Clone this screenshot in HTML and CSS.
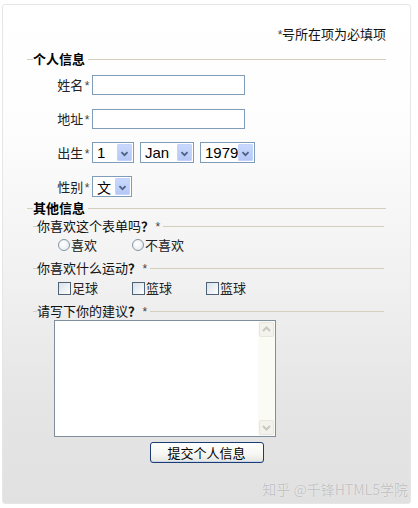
FILE: index.html
```html
<!DOCTYPE html>
<html lang="zh-CN">
<head>
<meta charset="utf-8">
<title>个人信息表单</title>
<link rel="stylesheet" href="styles.css">
</head>
<body>
<div class="page">
  <p class="note"><i class="star">*</i>号所在项为必填项</p>

  <section class="fs">
    <div class="legend"><span class="lg-pre"></span><span class="lg-text">个人信息</span><span class="lg-line"></span></div>
    <div class="row">
      <label class="lbl">姓名<i class="star">*</i></label>
      <input class="text-input" type="text">
    </div>
    <div class="row">
      <label class="lbl">地址<i class="star">*</i></label>
      <input class="text-input" type="text">
    </div>
    <div class="row">
      <label class="lbl">出生<i class="star">*</i></label>
      <span class="select sel-day"><span class="sel-val">1</span><span class="sel-btn"><svg width="15" height="17" viewBox="0 0 15 17"><polyline points="4,7 7.5,10.5 11,7" fill="none" stroke="#4d6185" stroke-width="2"/></svg></span></span>
      <span class="select sel-mon"><span class="sel-val">Jan</span><span class="sel-btn"><svg width="15" height="17" viewBox="0 0 15 17"><polyline points="4,7 7.5,10.5 11,7" fill="none" stroke="#4d6185" stroke-width="2"/></svg></span></span>
      <span class="select sel-year"><span class="sel-val">1979</span><span class="sel-btn"><svg width="15" height="17" viewBox="0 0 15 17"><polyline points="4,7 7.5,10.5 11,7" fill="none" stroke="#4d6185" stroke-width="2"/></svg></span></span>
    </div>
    <div class="row">
      <label class="lbl">性别<i class="star">*</i></label>
      <span class="select sel-sex"><span class="sel-val cjk">文</span><span class="sel-btn"><svg width="15" height="17" viewBox="0 0 15 17"><polyline points="4,7 7.5,10.5 11,7" fill="none" stroke="#4d6185" stroke-width="2"/></svg></span></span>
    </div>
  </section>

  <section class="fs fs-other">
    <div class="legend"><span class="lg-pre"></span><span class="lg-text">其他信息</span><span class="lg-line"></span></div>

    <div class="sub">
      <div class="legend sub-legend"><span class="lg-pre"></span><span class="lg-text">你喜欢这个表单吗<b>？</b><i class="star">*</i></span><span class="lg-line"></span></div>
      <div class="choices">
        <span class="choice"><span class="radio"></span>喜欢</span>
        <span class="choice"><span class="radio"></span>不喜欢</span>
      </div>
    </div>

    <div class="sub sub-2">
      <div class="legend sub-legend"><span class="lg-pre"></span><span class="lg-text">你喜欢什么运动<b>？</b><i class="star">*</i></span><span class="lg-line"></span></div>
      <div class="choices checks">
        <span class="choice"><span class="check"></span>足球</span>
        <span class="choice"><span class="check"></span>篮球</span>
        <span class="choice"><span class="check"></span>篮球</span>
      </div>
    </div>

    <div class="sub sub-3">
      <div class="legend sub-legend"><span class="lg-pre"></span><span class="lg-text">请写下你的建议<b>？</b><i class="star">*</i></span><span class="lg-line"></span></div>
      <div class="textarea">
        <div class="ta-text"></div>
        <div class="scrollbar">
          <span class="sb-btn"><svg width="13" height="13" viewBox="0 0 13 13"><polyline points="3,8 6.5,4.5 10,8" fill="none" stroke="#c9c8c0" stroke-width="2"/></svg></span>
          <span class="sb-track"></span>
          <span class="sb-btn"><svg width="13" height="13" viewBox="0 0 13 13"><polyline points="3,5 6.5,8.5 10,5" fill="none" stroke="#c9c8c0" stroke-width="2"/></svg></span>
        </div>
      </div>
    </div>
  </section>

  <div class="actions"><button class="btn" type="button">提交个人信息</button></div>

  <div class="watermark">知乎 @千锋HTML5学院</div>
</div>
</body>
</html>
```
FILE: styles.css
```css
* { box-sizing: border-box; }

html, body {
  margin: 0;
  padding: 0;
  background: #fff;
}

body {
  font-family: "Noto Sans CJK SC", "Liberation Sans", sans-serif;
  font-size: 13px;
  color: #111;
}

.page {
  position: relative;
  margin: 4px 0 0 2px;
  width: 409px;
  height: 500px;
  border: 1px solid #e6e6e6;
  border-radius: 3px;
  padding-top: 21px;
  background: linear-gradient(to bottom, #ffffff 0%, #fdfdfd 25%, #f1f1f1 55%, #e5e5e5 80%, #e1e1e1 100%);
}

.note {
  margin: 0 24px 0 0;
  height: 16px;
  line-height: 16px;
  text-align: right;
  color: #111;
}

.star {
  font-family: "Liberation Sans", sans-serif;
  font-style: italic;
  font-size: 12px;
  color: #444;
  margin-left: 1px;
}

.fs {
  margin: 9px 24px 0 24px;
}

.fs-other { margin-top: 3px; }

.legend {
  display: flex;
  align-items: center;
  height: 16px;
  line-height: 16px;
}

.lg-pre {
  width: 6px;
  height: 1px;
  background: #d3cfbc;
}

.lg-text {
  font-weight: bold;
  color: #000;
  margin-right: 3px;
  white-space: nowrap;
}

.lg-line {
  flex: 1;
  height: 1px;
  background: #d3cfbc;
}

.sub {
  margin: 2px 2px 0 6px;
}

.sub-2, .sub-3 { margin-top: 7px; }

.sub-legend .lg-pre { width: 4px; }
.sub-legend .lg-text { font-weight: normal; color: #111; }
.sub-legend b { font-weight: bold; }

.row {
  display: flex;
  align-items: center;
  height: 21px;
  margin-top: 13px;
}

.legend + .row { margin-top: 7px; }

.lbl {
  width: 62px;
  text-align: right;
  margin-right: 3px;
  color: #222;
  white-space: nowrap;
}

.text-input {
  width: 153px;
  height: 20px;
  margin: 0;
  padding: 0 3px;
  border: 1px solid #7f9db9;
  background: #fff;
  outline: none;
}

.select {
  display: flex;
  align-items: center;
  justify-content: space-between;
  height: 21px;
  border: 1px solid #7f9db9;
  background: #fff;
  padding: 0 1px 0 4px;
  font-family: "Liberation Sans", sans-serif;
  font-size: 15px;
  color: #000;
}

.select + .select { margin-left: 6px; }

.sel-day { width: 42px; }
.sel-mon { width: 54px; margin-left: 6px; }
.sel-year { width: 55px; margin-left: 7px; }
.sel-sex { width: 40px; }

.sel-val.cjk {
  font-family: "Noto Sans CJK SC", sans-serif;
  font-size: 14px;
}

.sel-btn {
  display: flex;
  width: 15px;
  height: 17px;
  border: 1px solid #c3d3fd;
  border-radius: 1px;
  background: linear-gradient(to bottom, #c9d8fc 0%, #b5c8f6 100%);
}

.choices {
  display: flex;
  margin-top: 3px;
  padding-left: 25px;
  height: 16px;
  line-height: 16px;
}

.checks { margin-top: 4px; }

.choice {
  display: flex;
  align-items: center;
  width: 74px;
  color: #222;
  white-space: nowrap;
}

.radio {
  width: 12px;
  height: 12px;
  border: 1px solid #8795a3;
  border-radius: 50%;
  background: radial-gradient(circle at 40% 40%, #ffffff 0%, #eef1f4 60%, #d9dee4 100%);
  margin-right: 1px;
}

.check {
  width: 13px;
  height: 13px;
  border: 1px solid #4f6275;
  background: linear-gradient(135deg, #d7e2ea 0%, #f2f5f7 70%, #ffffff 100%);
  margin-right: 1px;
}

.textarea {
  display: flex;
  width: 222px;
  height: 117px;
  margin: 1px 0 0 21px;
  border: 1px solid #7f8e9c;
  background: #fff;
}

.ta-text { flex: 1; }

.scrollbar {
  display: flex;
  flex-direction: column;
  width: 17px;
  background: #fbfbf6;
  padding: 1px 1px 1px 1px;
}

.sb-btn {
  display: flex;
  width: 15px;
  height: 15px;
  align-items: center;
  justify-content: center;
  border: 1px solid #e8e6dc;
  border-radius: 2px;
  background: #f3f2ec;
}

.sb-track { flex: 1; }

.actions {
  display: flex;
  justify-content: center;
  margin-top: 5px;
}

.btn {
  width: 114px;
  height: 21px;
  margin: 0;
  padding: 0;
  border: 1px solid #1b3d73;
  border-radius: 3px;
  background: linear-gradient(to bottom, #ffffff 0%, #f6f6f3 60%, #e6e5de 100%);
  box-shadow: inset 0 -1px 0 #c9d5ea, inset 0 1px 0 #ffffff;
  font-family: "Noto Sans CJK SC", sans-serif;
  font-size: 13px;
  line-height: 19px;
  color: #000;
}

.watermark {
  position: absolute;
  right: 2px;
  bottom: 6px;
  font-size: 14px;
  line-height: 16px;
  color: #c4c4c4;
  text-shadow: 0 0 1px #fff;
  white-space: nowrap;
}
```
